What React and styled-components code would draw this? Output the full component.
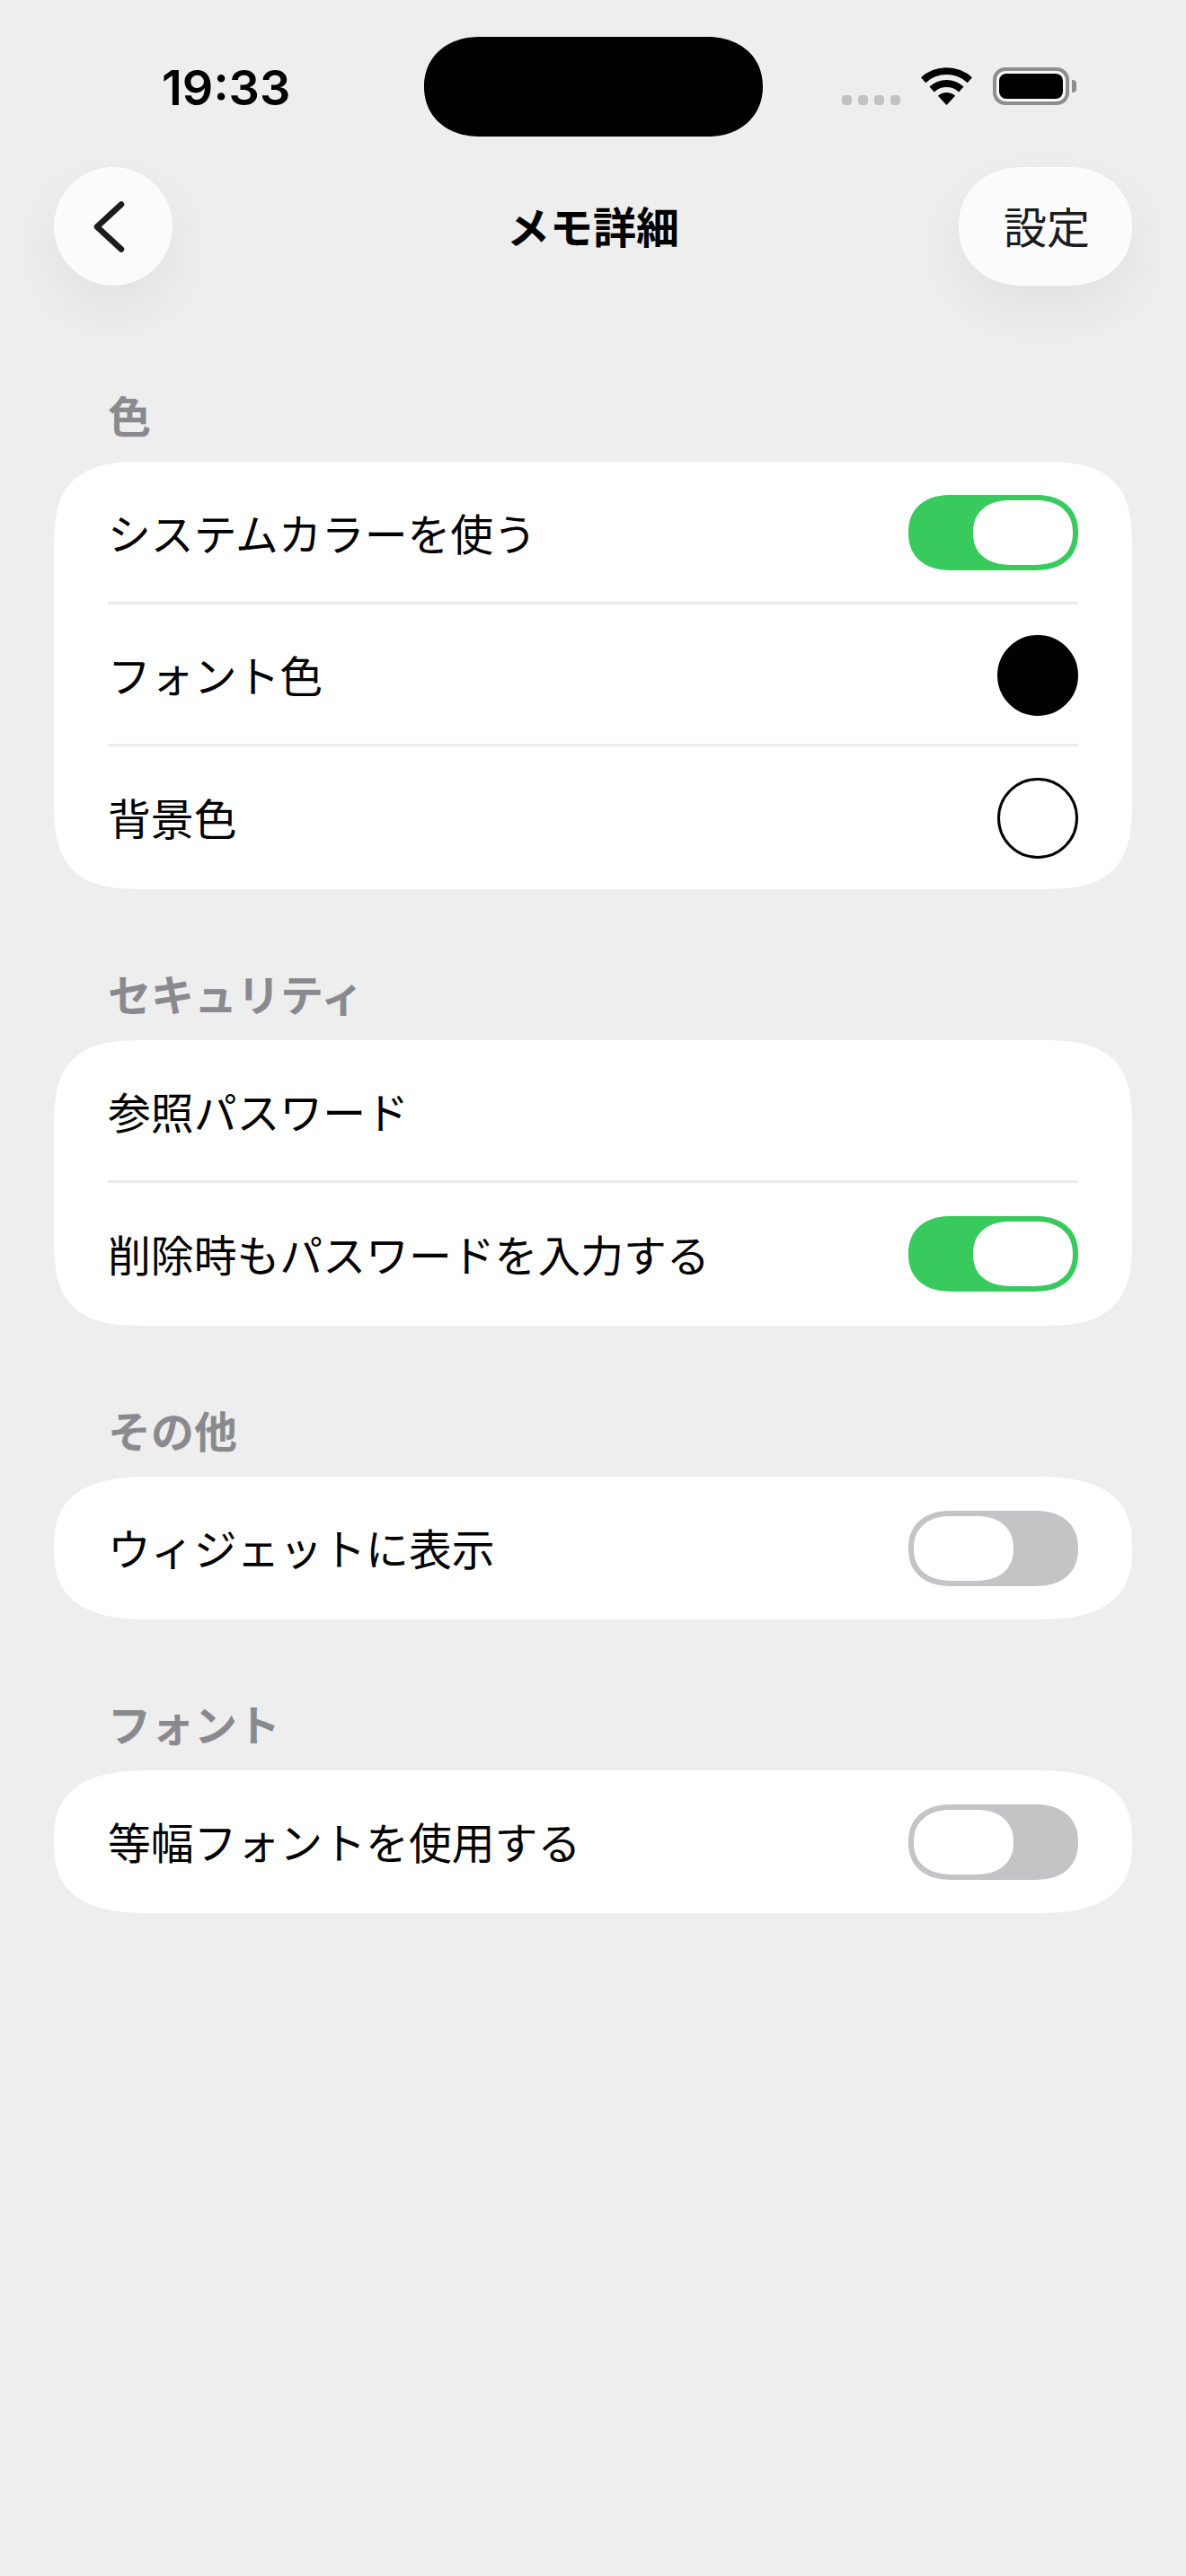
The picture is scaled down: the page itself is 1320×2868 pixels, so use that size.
import React from "react";
import styled, { createGlobalStyle } from "styled-components";

const sections = [
    {
        title: "色",
        rows: [
            { label: "システムカラーを使う", kind: "toggle", on: true },
            { label: "フォント色", kind: "color", color: "#000" },
            { label: "背景色", kind: "color", color: "#fff" },
        ],
    },
    {
        title: "セキュリティ",
        rows: [
            { label: "参照パスワード" },
            { label: "削除時もパスワードを入力する", kind: "toggle", on: true },
        ],
    },
    {
        title: "その他",
        rows: [{ label: "ウィジェットに表示", kind: "toggle", on: false }],
    },
    {
        title: "フォント",
        rows: [{ label: "等幅フォントを使用する", kind: "toggle", on: false }],
    },
];

function WifiIcon() {
    return (
        <svg width="57" height="42" viewBox="0 0 57 42" fill="#000">
            <path d="M0 11.3A42 42 0 0 1 57 11.3L51.7 17.15A34 34 0 0 0 5.3 17.15Z" />
            <path d="M9.4 21.5A28 28 0 0 1 47.6 21.5L42.1 27.4A20 20 0 0 0 14.9 27.4Z" />
            <path d="M18.95 31.8A14 14 0 0 1 38.05 31.8L28.5 42Z" />
        </svg>
    );
}

function ChevronIcon() {
    return (
        <svg width="35" height="57" viewBox="0 0 35 57" fill="none">
            <path
                d="M31 3.5L4 28.5L31 53.5"
                stroke="#1c1c1e"
                strokeWidth="6.5"
                strokeLinecap="round"
                strokeLinejoin="round"
            />
        </svg>
    );
}

export default function App() {
    return (
        <Page>
            <GlobalStyle />
            <StatusBar>
                <Time>19:33</Time>
                <Island />
                <StatusIcons>
                    <SignalDots>
                        <Dot />
                        <Dot />
                        <Dot />
                        <Dot />
                    </SignalDots>
                    <WifiIcon />
                    <Battery>
                        <BatteryBody>
                            <BatteryFill />
                        </BatteryBody>
                        <BatteryCap />
                    </Battery>
                </StatusIcons>
            </StatusBar>
            <NavBar>
                <BackButton aria-label="戻る">
                    <ChevronIcon />
                </BackButton>
                <Title>メモ詳細</Title>
                <SettingsButton>
                    <span>設定</span>
                </SettingsButton>
            </NavBar>
            <Sections>
                {sections.map((section) => (
                    <section key={section.title}>
                        <SectionLabel>{section.title}</SectionLabel>
                        <Card $single={section.rows.length === 1}>
                            {section.rows.map((row, i) => (
                                <Row key={row.label} $divider={i < section.rows.length - 1}>
                                    <RowLabel>{row.label}</RowLabel>
                                    {row.kind === "toggle" && (
                                        <Toggle $on={row.on}>
                                            <Thumb />
                                        </Toggle>
                                    )}
                                    {row.kind === "color" && <Swatch $color={row.color} />}
                                </Row>
                            ))}
                        </Card>
                    </section>
                ))}
            </Sections>
        </Page>
    );
}

const GlobalStyle = createGlobalStyle`
    html, body {
        margin: 0;
        padding: 0;
        background: #eeeeee;
    }
    * {
        box-sizing: border-box;
    }
`;

const Page = styled.div`
    width: 1320px;
    height: 2868px;
    overflow: hidden;
    background: #eeeeee;
    color: #000;
    font-family: "Noto Sans CJK JP", "Noto Sans", sans-serif;
`;

const StatusBar = styled.div`
    display: grid;
    grid-template-columns: 1fr 377px 1fr;
    height: 186px;
    padding-top: 41px;
`;

const Time = styled.div`
    padding: 27px 0 0 180px;
    font-family: Inter, "Liberation Sans", sans-serif;
    font-size: 54px;
    font-weight: 600;
    line-height: 60px;
`;

const Island = styled.div`
    height: 111px;
    background: #000;
    border-radius: 62px / 55.5px;
    corner-shape: superellipse(1.1);
`;

const StatusIcons = styled.div`
    display: flex;
    align-items: flex-end;
    justify-content: flex-end;
    height: 76px;
    padding-right: 122px;
`;

const SignalDots = styled.div`
    display: flex;
    gap: 7px;
    margin-right: 23px;
`;

const Dot = styled.div`
    width: 11px;
    height: 11px;
    border-radius: 4px;
    background: #c2c2c2;
`;

const Battery = styled.div`
    display: flex;
    align-items: center;
    margin-left: 23px;
`;

const BatteryBody = styled.div`
    width: 85px;
    height: 42px;
    padding: 3px;
    background: #f8f8f8;
    border: 4px solid #8e8e8e;
    border-radius: 14px;
`;

const BatteryFill = styled.div`
    width: 100%;
    height: 100%;
    background: #000;
    border-radius: 8px;
`;

const BatteryCap = styled.div`
    width: 5px;
    height: 14px;
    margin-left: 3px;
    background: #8e8e8e;
    border-radius: 0 4px 4px 0;
`;

const NavBar = styled.div`
    display: grid;
    grid-template-columns: 1fr auto 1fr;
    align-items: center;
    padding: 0 60px;
`;

const NavButton = styled.button`
    display: flex;
    align-items: center;
    justify-content: center;
    height: 132px;
    padding: 0;
    background: #fbfbfb;
    border: 1.5px solid #fdfdfd;
    box-shadow: 0 24px 60px rgba(0, 0, 0, 0.055);
    color: #1c1c1e;
    font-family: inherit;
`;

const BackButton = styled(NavButton)`
    justify-self: start;
    width: 132px;
    border-radius: 50%;
    svg {
        margin-right: 9px;
    }
`;

const SettingsButton = styled(NavButton)`
    justify-self: end;
    width: 193px;
    border-radius: 72px / 66px;
    corner-shape: superellipse(1.1);
    font-size: 48px;
    font-weight: 400;
    span {
        margin: 0 0 4px 3px;
    }
`;

const Title = styled.h1`
    margin: 0 0 5px;
    font-size: 48px;
    font-weight: 600;
    line-height: 60px;
`;

const Sections = styled.div`
    display: flex;
    flex-direction: column;
    gap: 89px;
    padding: 116.5px 60px 0;
`;

const SectionLabel = styled.h2`
    margin: 0 0 27.5px 60px;
    color: #8a8a8e;
    font-size: 48px;
    font-weight: 600;
    line-height: 52px;
`;

const Card = styled.div`
    padding: 0 60px;
    background: #fff;
    border-radius: ${(p) => (p.$single ? "110px / 79.3px" : "110px / 105px")};
    corner-shape: ${(p) => (p.$single ? "superellipse(1.4)" : "superellipse(1.65)")};
`;

const Row = styled.div`
    display: flex;
    align-items: center;
    justify-content: space-between;
    height: 158.67px;
    box-shadow: ${(p) => (p.$divider ? "inset 0 -3px 0 #ebebeb" : "none")};
`;

const RowLabel = styled.span`
    padding-bottom: 3px;
    font-size: 47.85px;
    line-height: 60px;
`;

const Toggle = styled.div`
    display: flex;
    justify-content: ${(p) => (p.$on ? "flex-end" : "flex-start")};
    align-items: center;
    width: 189px;
    height: 84px;
    padding: 0 6px;
    background: ${(p) => (p.$on ? "#38ca5c" : "#c4c4c6")};
    border-radius: 48px / 42px;
    corner-shape: superellipse(1.2);
`;

const Thumb = styled.div`
    width: 111px;
    height: 72px;
    background: #fff;
    border-radius: 42px / 36px;
    corner-shape: superellipse(1.2);
`;

const Swatch = styled.div`
    width: 90px;
    height: 90px;
    background: ${(p) => p.$color};
    border: 3px solid #000;
    border-radius: 50%;
`;
